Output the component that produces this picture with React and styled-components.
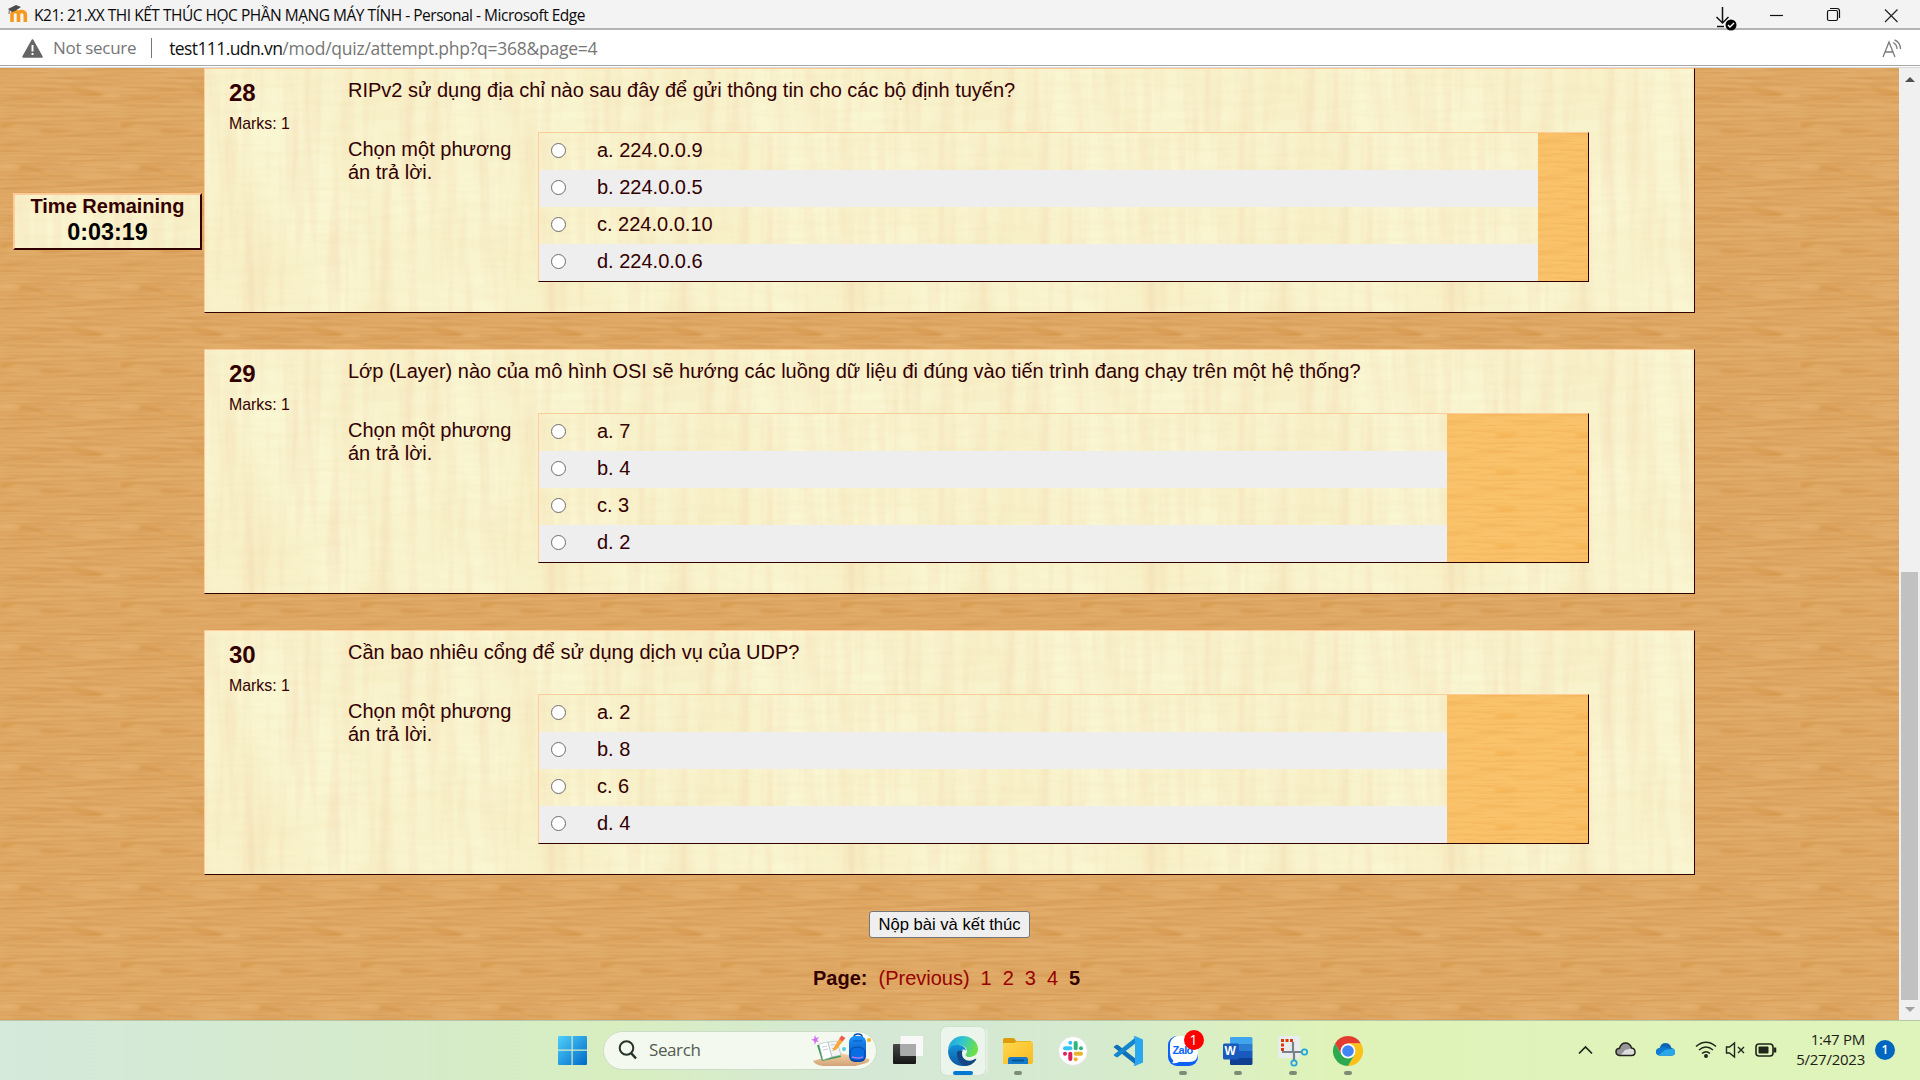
import React from "react";
import styled, { createGlobalStyle } from "styled-components";

const svgTile = (markup) => `url("data:image/svg+xml,${encodeURIComponent(markup)}")`;

const woodTile = svgTile(`<svg xmlns="http://www.w3.org/2000/svg" width="120" height="120" viewBox="0 0 120 120">
<filter id="a" x="0" y="0" width="100%" height="100%" color-interpolation-filters="sRGB"><feTurbulence type="fractalNoise" baseFrequency="0.017 0.34" numOctaves="3" seed="4" stitchTiles="stitch"/><feColorMatrix values="0 0 0 0 0.78  0 0 0 0 0.54  0 0 0 0 0.26  1 0 0 0 -0.37"/></filter>
<filter id="b" x="0" y="0" width="100%" height="100%" color-interpolation-filters="sRGB"><feTurbulence type="fractalNoise" baseFrequency="0.017 0.06" numOctaves="2" seed="11" stitchTiles="stitch"/><feColorMatrix values="0 0 0 0 0.84  0 0 0 0 0.60  0 0 0 0 0.31  0.7 0 0 0 -0.29"/></filter>
<filter id="s"><feGaussianBlur stdDeviation="0.8"/></filter>
<rect width="120" height="120" fill="#e2ad6b"/><rect width="120" height="120" filter="url(#b)"/><rect width="120" height="120" filter="url(#a)"/>
<g filter="url(#s)"><path d="M101 26 C88 19 78 20 66 18 C78 24 84 30 100 27Z" fill="#cf8a38" opacity=".36"/><path d="M102 26 C112 23 118 26 120 25 V29 C112 31 106 29 102 28Z" fill="#eebf80" opacity=".3"/><path d="M0 34 C16 30 26 31 40 28 M82 34 C96 34 108 33 120 34" stroke="#c8863b" stroke-width="1.2" fill="none" opacity=".35"/>
<path d="M0 55 H16 Q12 60 0 60Z" fill="#d08b3a" opacity=".4"/><path d="M40 61 H76 Q58 68 42 65Z" fill="#d08b3a" opacity=".32"/>
<path d="M20 99 C32 97 34 102 48 107 C58 109 64 108 72 108" stroke="#c98536" stroke-width="1.8" fill="none" opacity=".36"/><path d="M2 97 C10 94 14 97 19 97 V103 C12 103 8 104 0 102Z" fill="#edbd7d" opacity=".3"/><path d="M70 95 C88 94 96 91 120 90" stroke="#c98536" stroke-width="1.3" fill="none" opacity=".32"/></g></svg>`);

const paperTile = svgTile(`<svg xmlns="http://www.w3.org/2000/svg" width="300" height="300" viewBox="0 0 300 300">
<filter id="a" x="0" y="0" width="100%" height="100%" color-interpolation-filters="sRGB"><feTurbulence type="fractalNoise" baseFrequency="0.08 0.0067" numOctaves="3" seed="7" stitchTiles="stitch"/><feColorMatrix values="0 0 0 0 0.95  0 0 0 0 0.82  0 0 0 0 0.66  0.85 0 0 0 -0.36"/></filter>
<filter id="b" x="0" y="0" width="100%" height="100%" color-interpolation-filters="sRGB"><feTurbulence type="fractalNoise" baseFrequency="0.013 0.0067" numOctaves="2" seed="3" stitchTiles="stitch"/><feColorMatrix values="0 0 0 0 0.96  0 0 0 0 0.90  0 0 0 0 0.70  0.9 0 0 0 -0.34"/></filter>
<filter id="c" x="0" y="0" width="100%" height="100%" color-interpolation-filters="sRGB"><feTurbulence type="fractalNoise" baseFrequency="0.02 0.16" numOctaves="2" seed="9" stitchTiles="stitch"/><feColorMatrix values="0 0 0 0 0.94  0 0 0 0 0.87  0 0 0 0 0.68  0.4 0 0 0 -0.16"/></filter>
<rect width="300" height="300" fill="#f9f6d2"/><rect width="300" height="300" filter="url(#b)"/><rect width="300" height="300" filter="url(#c)"/><rect width="300" height="300" filter="url(#a)"/></svg>`);

const amberTile = svgTile(`<svg xmlns="http://www.w3.org/2000/svg" width="80" height="37" viewBox="0 0 80 37">
<filter id="a" x="0" y="0" width="100%" height="100%" color-interpolation-filters="sRGB"><feTurbulence type="fractalNoise" baseFrequency="0.025 0.32" numOctaves="3" seed="5" stitchTiles="stitch"/><feColorMatrix values="0 0 0 0 0.91  0 0 0 0 0.63  0 0 0 0 0.26  0.8 0 0 0 -0.3"/></filter>
<filter id="s"><feGaussianBlur stdDeviation="1"/></filter>
<rect width="80" height="37" fill="#fac36b"/><rect width="80" height="37" filter="url(#a)"/><path d="M18 19 Q34 18 42 20 Q34 24 18 22Z" fill="#f0a63c" opacity=".4" filter="url(#s)"/></svg>`);

const ui = `"Open Sans", "Noto Sans", sans-serif`;
const arial = `"Liberation Sans", Arial, sans-serif`;

const GlobalStyle = createGlobalStyle`
  * { box-sizing: border-box; }
  body { margin: 0; overflow: hidden; font-family: ${arial}; }
`;

const Screen = styled.div`
  width: 1920px;
  height: 1080px;
  display: flex;
  flex-direction: column;
  overflow: hidden;
`;

/* Browser window */
const TitleBar = styled.header`
  height: 30px;
  flex: none;
  display: flex;
  align-items: center;
  padding: 0 8px;
  background: #f3f3f3;
  border-bottom: 2px solid #b4b4b4;
  position: relative;
`;
const WindowTitle = styled.span`
  font: 15.5px/20px ${ui};
  letter-spacing: ${(p) => p.$spacing}px;
  color: #0b0b0b;
  margin: 2px 0 0 6px;
  white-space: nowrap;
  flex: 1;
`;
const WindowButtons = styled.div`
  display: flex;
  align-items: center;
  gap: 17px;
  position: absolute;
  right: 21px;
  top: 0;
  height: 31px;
  z-index: 1;
  svg:first-child { margin-top: 7px; }
`;
const AddressBar = styled.div`
  height: 38px;
  flex: none;
  display: flex;
  align-items: center;
  padding: 0 18px 1px 22px;
  background: #fff;
  position: relative;
  border-bottom: 1px solid #d9d9d9;
  box-shadow: inset 0 -1px 0 #fff, inset 0 -2px 0 #a6a6a6;
`;
const Security = styled.span`
  font: 17px/24px ${ui};
  letter-spacing: ${(p) => p.$spacing}px;
  color: #767676;
  margin-left: 10px;
  white-space: nowrap;
`;
const Separator = styled.i`
  width: 1px;
  height: 20px;
  background: #767676;
  margin: 0 17px 0 15px;
`;
const Url = styled.span`
  font: 17.5px/24px ${ui};
  letter-spacing: ${(p) => p.$spacing}px;
  color: #767676;
  flex: 1;
  white-space: nowrap;
  b { font-weight: 400; color: #111; letter-spacing: -0.6px; }
`;

const Viewport = styled.div`
  height: 952px;
  flex: none;
  display: flex;
`;
const Page = styled.main`
  width: 1899px;
  background: #dea661 ${woodTile} 0 0;
  display: flex;
  color: #300;
  font-size: 20px;
  line-height: 23px;
`;
const Side = styled.aside`
  width: 204px;
  flex: none;
  padding: 125px 0 0 13px;
`;
const Timer = styled.section`
  width: 189px;
  height: 57px;
  border: 2px solid;
  border-color: #fc9 #300 #300 #fc9;
  background: #f9f3cd ${paperTile};
  text-align: center;
  font-weight: bold;
  line-height: 22px;
`;
const TimerClock = styled.div`
  color: #000;
  font-size: 23.4px;
  line-height: 30px;
`;
const Content = styled.div`
  width: 1491px;
  display: flex;
  flex-direction: column;
`;
const Card = styled.section`
  height: 245px;
  flex: none;
  display: flex;
  margin-bottom: 36px;
  padding: 9px 0 0 24px;
  border: 1px solid;
  border-color: #fc9 #300 #300 #fc9;
  background: #f9f3cd ${paperTile};
`;
const Info = styled.div`
  width: 119px;
  flex: none;
`;
const Number = styled.h2`
  margin: 1px 0 8px;
  font-size: 24px;
  line-height: 28px;
`;
const Marks = styled.div`
  font-size: 15.9px;
  line-height: 18px;
`;
const Prompt = styled.div`
  margin-top: 1px;
`;
const AnswerBlock = styled.div`
  display: flex;
  margin-top: 30px;
`;
const Hint = styled.div`
  width: 190px;
  padding: 6px 20px 0 0;
`;
const Answers = styled.div`
  width: 1051px;
  display: flex;
  border: 1px solid;
  border-color: #fc9 #300 #300 #fc9;
  background: ${amberTile} ${(p) => p.$rowWidth - 50}px 0;
`;
const Rows = styled.div`
  width: ${(p) => p.$rowWidth}px;
`;
const Row = styled.label`
  height: 37px;
  display: flex;
  align-items: center;
  gap: 31px;
  padding: 0 0 3px 12px;
  background: ${(p) => (p.$striped ? "#eee" : `#f9f0c9 ${paperTile}`)};
`;
const Radio = styled.input`
  appearance: none;
  width: 15px;
  height: 15px;
  margin: 1px 0 0;
  border: 1px solid #6c6c6c;
  border-radius: 50%;
  background: #fff;
`;
const Submit = styled.button`
  align-self: center;
  width: 161px;
  height: 27px;
  padding: 0;
  border: 1px solid #767676;
  border-radius: 3px;
  background: #efefef;
  color: #000;
  font: 16.6px/22px ${arial};
  white-space: nowrap;
`;
const Pager = styled.nav`
  display: flex;
  gap: 11px;
  margin: 29px 0 0 609px;
  a { color: #900; }
`;

const Scrollbar = styled.div`
  width: 21px;
  background: #f0f0f0;
  display: flex;
  flex-direction: column;
  align-items: center;
`;
const Arrow = styled.i`
  width: 0;
  height: 0;
  border: 5px solid transparent;
  ${(p) => (p.$up ? "border-bottom-color: #505050; border-top: 0; margin: 9px 0 490px;" : "border-top-color: #a0a0a0; border-bottom: 0; margin-top: 7px;")}
`;
const Thumb = styled.i`
  width: 17px;
  height: 428px;
  background: #c1c1c1;
`;

/* Taskbar */
const Taskbar = styled.footer`
  height: 60px;
  flex: none;
  display: flex;
  align-items: center;
  padding: 0 25px 1px 557px;
  border-top: 1px solid #b9c7a6;
  background: linear-gradient(90deg, #d5e9dc 0, #d5ebc9 420px, #d8eec0 620px, #d5e8d6 860px, #d5eacf 1080px, #dff3b9 1330px, #dff4bb 1920px);
`;
const SearchBox = styled.div`
  width: 274px;
  height: 39px;
  margin: 0 16px 0 16px;
  padding: 0 5px 0 14px;
  display: flex;
  align-items: center;
  border-radius: 20px;
  background: #f3f9ee;
  border: 1px solid #cddcc8;
`;
const SearchLabel = styled.span`
  flex: 1;
  margin-left: 12px;
  color: #545b52;
  font: 17px/22px ${ui};
  letter-spacing: -0.4px;
`;
const Apps = styled.div`
  display: flex;
  margin-left: 12px;
`;
const AppSlot = styled.div`
  width: 55px;
  height: 57px;
  display: flex;
  flex-direction: column;
  align-items: center;
  justify-content: flex-end;
`;
const AppTile = styled.div`
  width: 44px;
  height: 48px;
  display: flex;
  justify-content: center;
  padding-top: 9px;
  border-radius: 5px;
  position: relative;
  margin-bottom: 4px;
  ${(p) => p.$active && "background: #ebf5ec; box-shadow: 0 0 1px #9eae9e, 4px 0 0 -1px #e1efe0;"}
  svg { flex: none; overflow: visible; }
`;
const Running = styled.i`
  position: absolute;
  bottom: 0;
  left: 50%;
  width: ${(p) => (p.$active ? 20 : 8)}px;
  height: 4px;
  border-radius: 2px;
  background: ${(p) => (p.$active ? "#0078d4" : "#7e8c76")};
  transform: translateX(-50%);
`;
const Badge = styled.b`
  position: absolute;
  left: 23px;
  top: 3px;
  width: 20px;
  height: 20px;
  border-radius: 50%;
  background: #f00;
  color: #fff;
  font: 14px/20px ${ui};
  text-align: center;
`;
const Tray = styled.div`
  margin-left: auto;
  display: flex;
  align-items: center;
  svg { flex: none; }
`;
const Clock = styled.div`
  width: 88px;
  text-align: right;
  color: #1c2117;
  font: 15px/20px ${ui};
  letter-spacing: -0.25px;
  white-space: nowrap;
  margin-top: -2px;
`;
const Notice = styled.b`
  width: 20px;
  height: 20px;
  margin-left: 10px;
  border-radius: 50%;
  background: #0067c0;
  color: #fff;
  font: 600 12px/19px ${ui};
  text-align: center;
`;

const MoodleIcon = () => (
  <svg width="20" height="18" viewBox="0 0 20 18">
    <path d="M4 17V9.500q0-3 3.2-3T10.500 9.500v7.500M10.500 9.500q0-3 3.200-3T17.300 9.500v7.500" fill="none" stroke="#f59a1c" strokeWidth="3.600" />
    <path d="M0 4 8 0l5 2-6 4-3 1Z" fill="#4b4b4b" />
    <path d="M1.500 4 1 9" stroke="#666" fill="none" />
  </svg>
);
const WarningIcon = () => (
  <svg width="21" height="19" viewBox="0 0 21 19">
    <path d="M10.500 1.200 19.700 17.800H1.300Z" fill="#666" stroke="#666" strokeWidth="2" strokeLinejoin="round" />
    <path d="M10.500 6v6.500M10.500 14v2" stroke="#fff" strokeWidth="1.900" />
  </svg>
);
const DownloadIcon = () => (
  <svg width="24" height="26" viewBox="0 0 24 26">
    <path d="M8.500 1v16M2.500 11l6 6 6-6M3 20.500h7" fill="none" stroke="#111" strokeWidth="1.500" />
    <circle cx="17" cy="19" r="5.500" fill="#000" />
    <path d="m14 19 2 2 4-4" fill="none" stroke="#fff" strokeWidth="1.400" />
  </svg>
);
const WindowControls = () => (
  <svg width="144" height="20" viewBox="0 0 144 20">
    <path d="M15 9.500h13" stroke="#111" strokeWidth="1.200" />
    <rect x="72.500" y="4.500" width="10" height="10" rx="1.500" fill="none" stroke="#111" strokeWidth="1.200" />
    <path d="M75 2.500h7q2.500 0 2.500 2.500v7" fill="none" stroke="#111" strokeWidth="1.200" />
    <path d="m130 3.500 12.500 12.500m0-12.500L130 16" stroke="#222" strokeWidth="1.200" />
  </svg>
);
const ReadAloudIcon = () => (
  <svg width="20" height="19" viewBox="0 0 20 19">
    <path d="M1 18 7 3l6 15M3.200 13h7.600M11 3.500q4 2 4 6.500M12.500.800q6 2.500 6 9.200" fill="none" stroke="#7a7a7a" strokeWidth="1.300" />
  </svg>
);
const WindowsIcon = () => (
  <svg width="30" height="30" viewBox="0 0 30 30">
    <defs><linearGradient id="win" x1="0" y1="0" x2="1" y2="1"><stop stopColor="#4fd0fb" /><stop offset="1" stopColor="#0069c8" /></linearGradient></defs>
    <path d="M2 1h12.500v13.500H1V2q0-1 1-1ZM15.700 1H29q1 0 1 1v12.500H15.700ZM1 15.700h13.500V30H2q-1 0-1-1ZM15.700 15.700H30V29q0 1-1 1H15.700Z" fill="url(#win)" />
  </svg>
);
const SearchIcon = () => (
  <svg width="19" height="20" viewBox="0 0 19 20">
    <circle cx="8.500" cy="8" r="6.800" fill="none" stroke="#26332b" strokeWidth="2" />
    <path d="m13 13 5 5.500" stroke="#26332b" strokeWidth="2.600" />
  </svg>
);
const SchoolArt = () => (
  <svg width="60" height="34" viewBox="0 0 60 34">
    <defs>
      <linearGradient id="bag" x1="0" y1="0" x2="0" y2="1"><stop stopColor="#1b93ff" /><stop offset="1" stopColor="#0742a8" /></linearGradient>
      <linearGradient id="sand" x1="0" y1="0" x2="0" y2="1"><stop stopColor="#f5d3a6" /><stop offset="1" stopColor="#d1a277" /></linearGradient>
    </defs>
    <path d="M2 28 28 20 58 26q2 3-6 5l-8 2H12q-8-1-10-5Z" fill="url(#sand)" />
    <path d="m6 12 5 16 19-4-3-13Z" fill="#3e9a56" />
    <path d="m8 11 9-2 4 15-9 3Z" fill="#fff" stroke="#a9b7c0" strokeWidth=".6" />
    <path d="m17 9 9-1 4 14-9 2Z" fill="#f1f4f2" stroke="#a9b7c0" strokeWidth=".6" />
    <path d="m11 14 5-1m-4 4 5-1m3-4 4-.500m-3 4 4-.500" stroke="#c3cccc" />
    <path d="m22 16 6-10 3.500 2.500-6 8-4 1.500Z" fill="#f8a53a" /><path d="m28 6 2.500-3.500 4 2.500-3 3.500Z" fill="#ee5d50" />
    <path d="m4 2 1 3 3-1-2 3 2 2-3-.500L4 12 3 8 0 6.500 3 6Z" fill="#d56bf0" />
    <circle cx="33" cy="16" r="2" fill="#58cbe5" /><circle cx="58" cy="7" r="2" fill="#f5b21d" />
    <path d="M43 4q0-3 4-3t4 3" fill="none" stroke="#0b4da9" strokeWidth="1.500" />
    <rect x="38" y="3" width="17" height="26" rx="6" fill="url(#bag)" />
    <path d="M39 21q0-7 7.500-7t7.500 7l-.500 5q-7 3-14 0Z" fill="#086de0" stroke="#043d94" strokeWidth=".7" />
    <path d="M41 24q6 2 11 0" stroke="#a576f2" fill="none" strokeWidth="1.500" /><path d="M42 8h9" stroke="#0557bd" />
  </svg>
);
const TaskViewIcon = () => (
  <svg width="30" height="30" viewBox="0 0 30 30">
    <defs><linearGradient id="tv" x1="0" y1="0" x2="0" y2="1"><stop stopColor="#484848" /><stop offset="1" stopColor="#161616" /></linearGradient></defs>
    <rect x="0" y="9" width="23" height="20" rx="1" fill="url(#tv)" />
    <rect x="7.500" y="1" width="22.500" height="20" rx="1" fill="#f7f8f7" />
    <path d="M7.500 9H23v12H7.500Z" fill="#a9abab" />
  </svg>
);
const EdgeIcon = () => (
  <svg width="30" height="30" viewBox="0 0 30 30">
    <defs>
      <linearGradient id="eg" x1="0" y1="0" x2="1" y2=".3"><stop stopColor="#1d9de2" /><stop offset=".5" stopColor="#30c6d2" /><stop offset="1" stopColor="#6bdf4c" /></linearGradient>
      <linearGradient id="eb" x1="0" y1="0" x2="0" y2="1"><stop stopColor="#1493d8" /><stop offset="1" stopColor="#0c59a4" /></linearGradient>
    </defs>
    <path d="M0 15C0 6 7 0 15 0s15 6 15 13c0 6-5 8-9 8-3 0-4-2-3-3 3-4-1-9-7-9C5 9 1 12 0 15Z" fill="url(#eg)" />
    <path d="M0 15C2 10 6 8 11 9c4 0 7 3 7 6-3-4-8 1-5 7 3 5 9 5 14 2-3 4-7 6-12 6C7 30 0 24 0 15Z" fill="url(#eb)" />
    <path d="M9 17c0 5 2 11 8 13 5 0 9-3 11-6 1-2-1-1-2-.500-6 3-12 0-12-6 0-1 0-2 1-3-3 0-6 0-6 2.500Z" fill="#134684" />
  </svg>
);
const FolderIcon = () => (
  <svg width="30" height="30" viewBox="0 0 30 30">
    <defs><linearGradient id="fo" x1="0" y1="0" x2="1" y2="1"><stop stopColor="#ffd84e" /><stop offset="1" stopColor="#f9b91f" /></linearGradient></defs>
    <path d="M0 4q0-2 2-2h8q2 0 3 3h15v8H0Z" fill="#dc9b0c" />
    <path d="M0 8q0-1 1-1h10l3-1.500h14q2 0 2 2V26q0 2-2 2H0Z" fill="url(#fo)" />
    <path d="M5 28v-4.500q0-2.500 2.500-2.500h15q2.500 0 2.500 2.500V28Z" fill="#147ac9" /><path d="M9 24.500h12" stroke="#075294" strokeWidth="1.800" />
  </svg>
);
const SlackIcon = () => (
  <svg width="30" height="30" viewBox="0 0 30 30">
    <circle cx="15" cy="15" r="14.500" fill="#fff" stroke="#dfe4df" />
    <g strokeWidth="4" strokeLinecap="round">
      <path d="M12.300 12.300H7" stroke="#36c5f0" /><path d="M12.300 6.800h.010" stroke="#36c5f0" />
      <path d="M17.700 12.300V7" stroke="#2eb67d" /><path d="M23 12.300h.010" stroke="#2eb67d" />
      <path d="M17.700 17.700H23" stroke="#ecb22e" /><path d="M17.700 23.200h.010" stroke="#ecb22e" />
      <path d="M12.300 17.700V23" stroke="#e01e5a" /><path d="M7 17.700h.010" stroke="#e01e5a" />
    </g>
  </svg>
);
const CodeIcon = () => (
  <svg width="30" height="30" viewBox="0 0 30 30">
    <path d="M1 10.500 3 9q1-.500 2 0l18 14v6L1 11.500q-.600-.500 0-1Z" fill="#0e70b8" />
    <path d="M1 19.500 3 21q1 .500 2 0L23 7V1L1 18.500q-.600.500 0 1Z" fill="#1487cf" />
    <path d="M22 0 30 3.500v23L22 30q-1 0-1.500-1l1.500-1V2l-1.500-1q.500-1 1.500-1Z" fill="#29a8f0" />
  </svg>
);
const ZaloLabel = styled.span`
  position: absolute;
  left: 12px;
  top: 15px;
  color: #0b66f5;
  font: bold 11px/16px ${arial};
  letter-spacing: -0.6px;
`;
const ZaloIcon = () => (
  <svg width="30" height="30" viewBox="0 0 30 30">
    <rect width="30" height="30" rx="9" fill="#0c62f4" />
    <path d="M9 0h12q9 0 9 9v8q0 9-9 9H11q-4 2-7 1 2-1 1-3-3-3-3-8V9q0-7 7-9Z" fill="#fff" />
  </svg>
);
const WordGlyph = styled.span`
  position: absolute;
  left: 9px;
  top: 16px;
  color: #fff;
  font: bold 12px/16px ${arial};
`;
const WordIcon = () => (
  <svg width="30" height="30" viewBox="0 0 30 30">
    <path d="M8 1h20q1.500 0 1.500 1.500V8H7V2q0-1 1-1Z" fill="#41a5ee" /><path d="M7 8h22.500v7H7Z" fill="#2b7cd3" />
    <path d="M7 15h22.500v7H7Z" fill="#185abd" /><path d="M7 22h22.500v5.500Q29.500 29 28 29H8q-1 0-1-1Z" fill="#103f91" />
    <rect x="0" y="7.500" width="16" height="16" rx="1.500" fill="#185abd" />
  </svg>
);
const SnipIcon = () => (
  <svg width="30" height="30" viewBox="0 0 30 30">
    <rect width="22" height="22" rx="2" fill="#e9ecee" />
    <path d="M4.500 15V4.500H15" fill="none" stroke="#d83b01" strokeWidth="3" strokeDasharray="3 1.500" />
    <path d="M15 6v10M4 16h19M16 16v9M15 16l-1-1" stroke="#7a8287" strokeWidth="2.200" fill="none" />
    <circle cx="26.500" cy="16" r="2.700" fill="none" stroke="#1ea5e1" strokeWidth="1.700" />
    <circle cx="16" cy="27" r="2.700" fill="none" stroke="#1ea5e1" strokeWidth="1.700" />
  </svg>
);
const ChromeIcon = () => (
  <svg width="30" height="30" viewBox="0 0 30 30">
    <path d="M2 7.500A15 15 0 0 1 28 7.500H15L8.500 18.700Z" fill="#e33b2e" />
    <path d="M28 7.500A15 15 0 0 1 15 30l6.500-11.200L21.500 11 15 7.500Z" fill="#fbc116" />
    <path d="M2 7.500A15 15 0 0 0 15 30l6.500-11.200H8.500Z" fill="#2da94f" />
    <circle cx="15" cy="15" r="7.500" fill="#fff" /><circle cx="15" cy="15" r="5.800" fill="#4285f4" />
  </svg>
);
const cloud = "M4.500 13.500Q1 13 1 9.800T4.500 6.200Q6 1 10.500 1t6 5Q20 6.500 20 10t-3.500 3.500Z";
const TrayIcons = () => (
  <svg width="200" height="22" viewBox="0 0 200 22">
    <defs>
      <clipPath id="cl"><path d={cloud} transform="translate(0 3)" /></clipPath>
    </defs>
    <path d="m2 14.500 6.500-6.500 6.500 6.500" fill="none" stroke="#20251b" strokeWidth="1.700" />
    <g transform="translate(38 0)"><g clipPath="url(#cl)"><path d="M0 0h22v22H0Z" fill="#ddd" /><path d="M0 14V0h18v9L10 11l-5 6Z" fill="#969696" /></g><path d={cloud} transform="translate(0 3)" fill="none" stroke="#20251b" strokeWidth="1.500" /></g>
    <g transform="translate(78 0)" clipPath="url(#cl)"><path d="M0 0h22v22H0Z" fill="#0f65b5" /><path d="M0 22V9l9-1 11 3v11Z" fill="#0f7bd2" /><path d="m1 18 9-7 12-2v10Z" fill="#28a8ea" /></g>
    <g fill="none" stroke="#20251b" strokeWidth="1.500" transform="translate(118 0)">
      <path d="M1 7.500q10-8.500 20 0M4 11q7-6 14 0M7 14.500q4-3.500 8 0" /><circle cx="11" cy="17" r="1.200" fill="#20251b" />
    </g>
    <path d="M149.500 8h3l5-4v14l-5-4h-3ZM161 8l6 6m0-6-6 6" fill="none" stroke="#20251b" strokeWidth="1.400" />
    <rect x="179" y="5" width="17" height="12" rx="3" fill="none" stroke="#20251b" strokeWidth="1.600" />
    <rect x="181.500" y="7.500" width="10" height="7" rx="1" fill="#20251b" /><path d="M198 8.500v5" stroke="#20251b" strokeWidth="2.500" />
  </svg>
);

const questions = [
  { no: 28, text: "RIPv2 sử dụng địa chỉ nào sau đây để gửi thông tin cho các bộ định tuyến?", width: 999, answers: ["a. 224.0.0.9", "b. 224.0.0.5", "c. 224.0.0.10", "d. 224.0.0.6"] },
  { no: 29, text: "Lớp (Layer) nào của mô hình OSI sẽ hướng các luồng dữ liệu đi đúng vào tiến trình đang chạy trên một hệ thống?", width: 908, answers: ["a. 7", "b. 4", "c. 3", "d. 2"] },
  { no: 30, text: "Cần bao nhiêu cổng để sử dụng dịch vụ của UDP?", width: 908, answers: ["a. 2", "b. 8", "c. 6", "d. 4"] },
];

const apps = [
  { icon: <EdgeIcon />, running: true, active: true },
  { icon: <FolderIcon />, running: true },
  { icon: <SlackIcon /> },
  { icon: <CodeIcon /> },
  { icon: <><ZaloIcon /><ZaloLabel>Zalo</ZaloLabel><Badge>1</Badge></>, running: true },
  { icon: <><WordIcon /><WordGlyph>W</WordGlyph></>, running: true },
  { icon: <SnipIcon />, running: true },
  { icon: <ChromeIcon />, running: true },
];

const Question = ({ no, text, width, answers }) => (
  <Card>
    <Info>
      <Number>{no}</Number>
      <Marks>Marks: 1</Marks>
    </Info>
    <div>
      <Prompt>{text}</Prompt>
      <AnswerBlock>
        <Hint>Chọn một phương<br />án trả lời.</Hint>
        <Answers $rowWidth={width}>
          <Rows $rowWidth={width}>
            {answers.map((a, i) => (
              <Row key={a} $striped={i % 2 === 1}>
                <Radio type="radio" name={`q${no}`} />
                {a}
              </Row>
            ))}
          </Rows>
        </Answers>
      </AnswerBlock>
    </div>
  </Card>
);

export default function App() {
  return (
    <Screen>
      <GlobalStyle />
      <TitleBar>
        <MoodleIcon />
        <WindowTitle $spacing={-0.48}>K21: 21.XX THI KẾT THÚC HỌC PHẦN MẠNG MÁY TÍNH - Personal - Microsoft Edge</WindowTitle>
        <WindowButtons>
          <DownloadIcon />
          <WindowControls />
        </WindowButtons>
      </TitleBar>
      <AddressBar>
        <WarningIcon />
        <Security $spacing={-0.3}>Not secure</Security>
        <Separator />
        <Url $spacing={-0.25}><b>test111.udn.vn</b>/mod/quiz/attempt.php?q=368&amp;page=4</Url>
        <ReadAloudIcon />
      </AddressBar>
      <Viewport>
        <Page>
          <Side>
            <Timer>
              Time Remaining
              <TimerClock>0:03:19</TimerClock>
            </Timer>
          </Side>
          <Content>
            {questions.map((q) => <Question key={q.no} {...q} />)}
            <Submit>Nộp bài và kết thúc</Submit>
            <Pager>
              <b>Page:</b>
              <a>(Previous)</a>
              <a>1</a>
              <a>2</a>
              <a>3</a>
              <a>4</a>
              <b>5</b>
            </Pager>
          </Content>
        </Page>
        <Scrollbar>
          <Arrow $up />
          <Thumb />
          <Arrow />
        </Scrollbar>
      </Viewport>
      <Taskbar>
        <WindowsIcon />
        <SearchBox>
          <SearchIcon />
          <SearchLabel>Search</SearchLabel>
          <SchoolArt />
        </SearchBox>
        <TaskViewIcon />
        <Apps>
          {apps.map((a, i) => (
            <AppSlot key={i}>
              <AppTile $active={a.active}>
                {a.icon}
                {a.running && <Running $active={a.active} />}
              </AppTile>
            </AppSlot>
          ))}
        </Apps>
        <Tray>
          <TrayIcons />
          <Clock>1:47 PM<br />5/27/2023</Clock>
          <Notice>1</Notice>
        </Tray>
      </Taskbar>
    </Screen>
  );
}
